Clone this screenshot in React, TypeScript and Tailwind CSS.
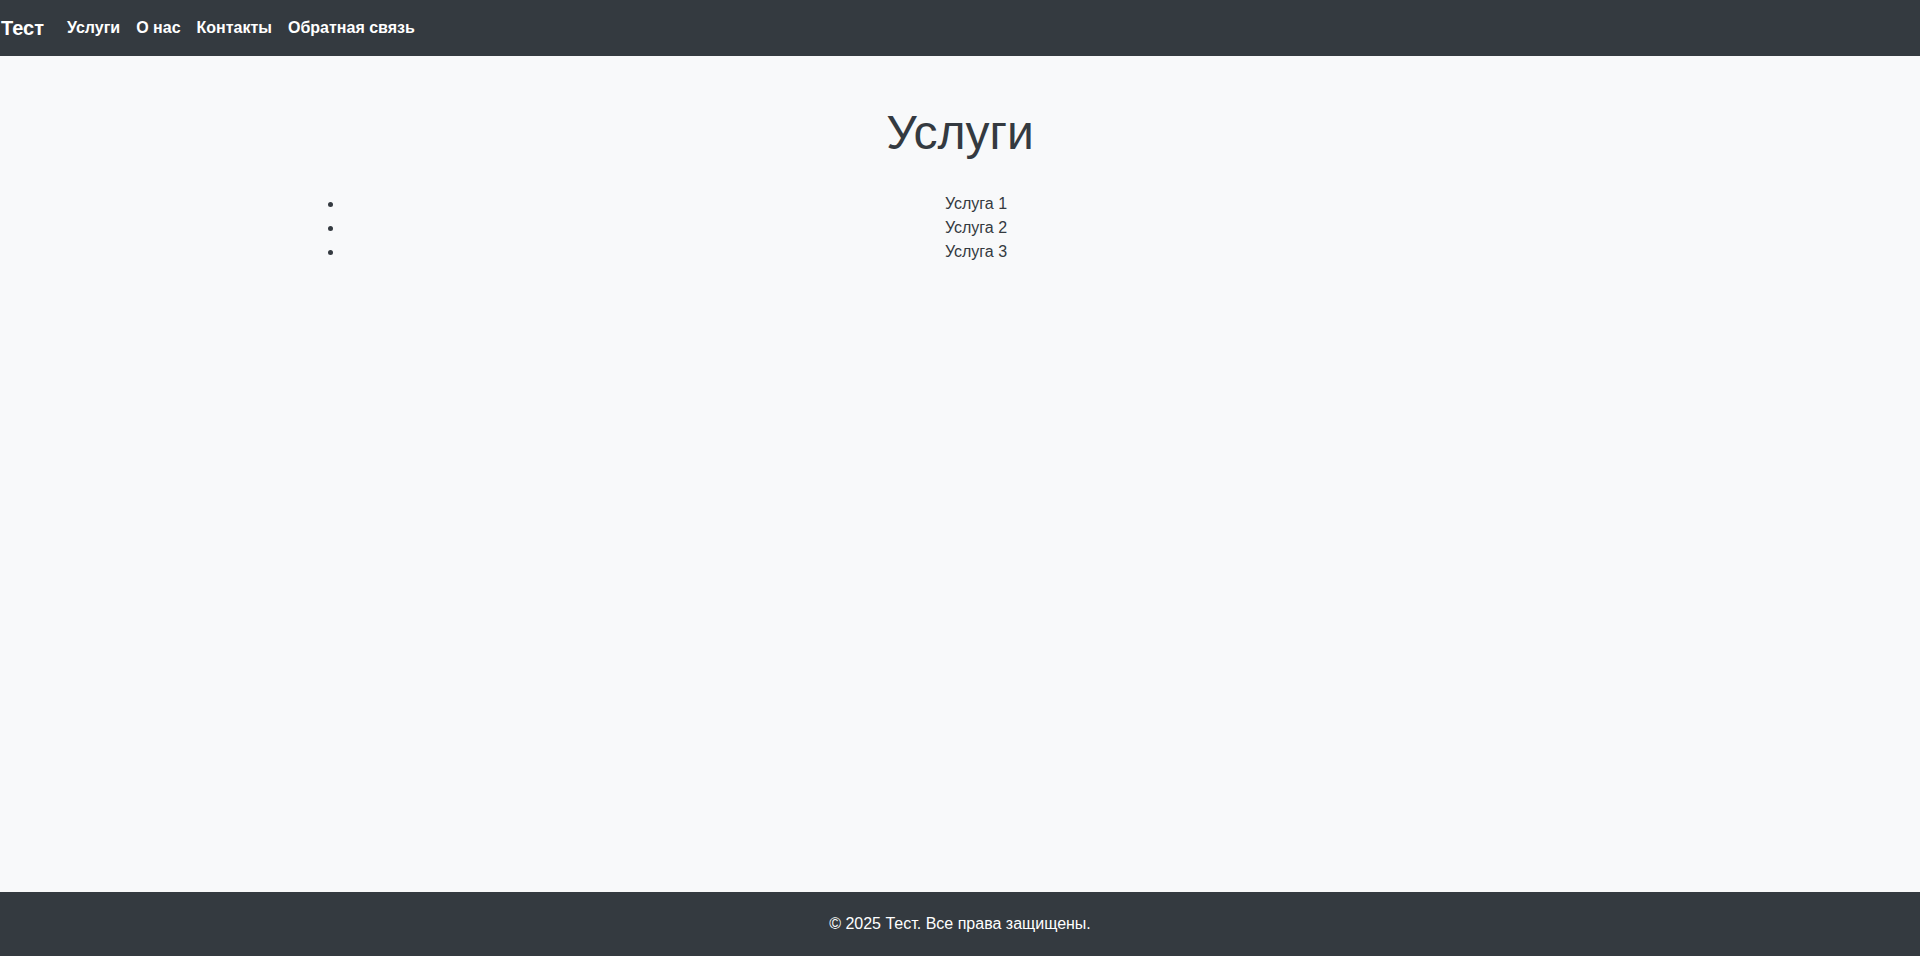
import React from "react";

export default function App() {
  return (
    <div
      className="min-h-screen flex flex-col bg-[#f8f9fa] text-[#343a40]"
      style={{ fontFamily: '"Liberation Sans", Arial, sans-serif' }}
    >
      <header className="h-[56px] bg-[#343a40] flex items-center text-white">
        <span className="text-[20px] font-bold leading-[24px] pl-[1px]">Тест</span>
        <nav className="ml-[23px]">
          <ul className="flex gap-[16px] text-[16px] font-bold leading-6">
            <li>Услуги</li>
            <li>О нас</li>
            <li>Контакты</li>
            <li>Обратная связь</li>
          </ul>
        </nav>
      </header>
      <main className="flex-1 pt-[17px]">
        <div className="max-w-[1320px] mx-auto px-3 text-center">
          <h1 className="text-[48px] leading-[55px] font-normal my-8">Услуги</h1>
          <ul className="list-disc pl-8 text-[16px] leading-6">
            <li>Услуга 1</li>
            <li>Услуга 2</li>
            <li>Услуга 3</li>
          </ul>
        </div>
      </main>
      <footer className="h-[64px] bg-[#343a40] text-white flex items-center justify-center text-[16px] leading-6">
        © 2025 Тест. Все права защищены.
      </footer>
    </div>
  );
}
